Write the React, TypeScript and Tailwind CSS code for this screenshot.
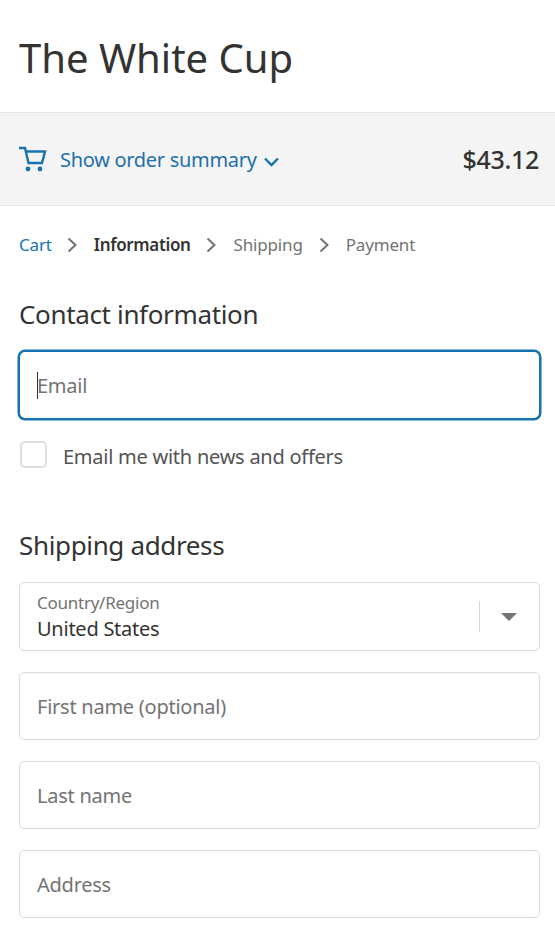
import type { ReactNode } from 'react';

function Chevron() {
  return (
    <svg width="11" height="16" viewBox="0 0 11 16" fill="none" stroke="#737373" strokeWidth="2" className="shrink-0">
      <path d="M1.5 1.5 8.5 8l-7 6.5" />
    </svg>
  );
}

function Field({ label }: { label: string }) {
  return (
    <div className="h-[68px] rounded-[5px] border border-[#d9d9d9] bg-white flex items-center px-[17px] pt-[1px] text-[20px] tracking-[-0.25px] text-[#737373]">
      {label}
    </div>
  );
}

function Heading({ children }: { children: ReactNode }) {
  return <h2 className="text-[26px] leading-[36px] tracking-[-0.35px] text-[#333333]">{children}</h2>;
}

function App() {
  return (
    <div className="min-h-screen h-[928px] overflow-hidden bg-white font-['Noto_Sans','Open_Sans',sans-serif]">
      <header className="h-[112px] flex items-center px-[19px]">
        <h1 className="text-[40px] leading-[56px] tracking-[0px] text-[#333333] mt-[4px]">The White Cup</h1>
      </header>

      <div className="h-[94px] bg-[#f4f4f4] border-y border-[#e6e6e6] flex items-center justify-between pl-[19px] pr-[16px]">
        <div className="flex items-center text-[#1f6fad]">
          <svg width="28" height="26" viewBox="0 0 28 26" fill="none" stroke="#1773b0" strokeWidth="2.4" className="mr-[13px]">
            <path d="M0 2h6l3.5 15h13.5l3-11.5H7" />
            <circle cx="9" cy="23" r="2.4" fill="#1773b0" stroke="none" />
            <circle cx="21" cy="23" r="2.4" fill="#1773b0" stroke="none" />
          </svg>
          <span className="text-[20px] tracking-[-0.3px] mr-[7px] mt-[2px]">Show order summary</span>
          <svg width="15" height="10" viewBox="0 0 15 10" fill="none" stroke="#1773b0" strokeWidth="2.4" className="mt-[6px]">
            <path d="M1 1.5l6.5 6.5L14 1.5" />
          </svg>
        </div>
        <span className="text-[25px] font-medium tracking-[-0.3px] text-[#333333] mt-[2px]">$43.12</span>
      </div>

      <nav className="flex items-center h-[78px] px-[19px] text-[17px] tracking-[-0.17px] text-[#737373]">
        <span className="text-[#1773b0]">Cart</span>
        <span className="ml-[15px] mr-[16px]"><Chevron /></span>
        <span className="font-semibold tracking-[-0.35px] text-[#333333]">Information</span>
        <span className="ml-[15px] mr-[17px]"><Chevron /></span>
        <span>Shipping</span>
        <span className="mx-[16px]"><Chevron /></span>
        <span>Payment</span>
      </nav>

      <main className="pl-[19px] pr-[15px]">
        <div className="mt-[12px]">
          <Heading>Contact information</Heading>
        </div>
        <div className="mt-[18px] -mx-px h-[70px] rounded-[7px] border-2 border-[#1773b0] shadow-[0_0_0_0.5px_#1773b0] bg-white flex items-center pl-[17px] pt-[1px] text-[20px] tracking-[-0.25px] text-[#737373]">
          <span className="w-px h-[27px] bg-[#333333]" />
          <span className="-ml-px">Email</span>
        </div>
        <label className="mt-[21px] flex items-start">
          <span className="ml-[1px] w-[27px] h-[27px] rounded-[5px] border-2 border-[#dedede] bg-white" />
          <span className="ml-[16px] mt-[2px] text-[20px] leading-[27px] tracking-[-0.25px] text-[#545454]">Email me with news and offers</span>
        </label>

        <div className="mt-[57px]">
          <Heading>Shipping address</Heading>
        </div>
        <div className="mt-[19px] flex flex-col gap-[21px]">
          <div className="h-[69px] rounded-[5px] border border-[#d9d9d9] bg-white flex items-center pl-[17px]">
            <div className="flex-1 flex flex-col">
              <span className="text-[17px] leading-[22px] tracking-[-0.25px] text-[#737373]">Country/Region</span>
              <span className="text-[20px] leading-[27px] mt-[1px] tracking-[-0.25px] text-[#333333]">United States</span>
            </div>
            <span className="w-px h-[31px] bg-[#d9d9d9]" />
            <span className="ml-[21px] mr-[22px] w-0 h-0 border-x-[8px] border-x-transparent border-t-[8px] border-t-[#737373]" />
          </div>
          <Field label="First name (optional)" />
          <Field label="Last name" />
          <Field label="Address" />
        </div>
      </main>
    </div>
  );
}

export default App;
